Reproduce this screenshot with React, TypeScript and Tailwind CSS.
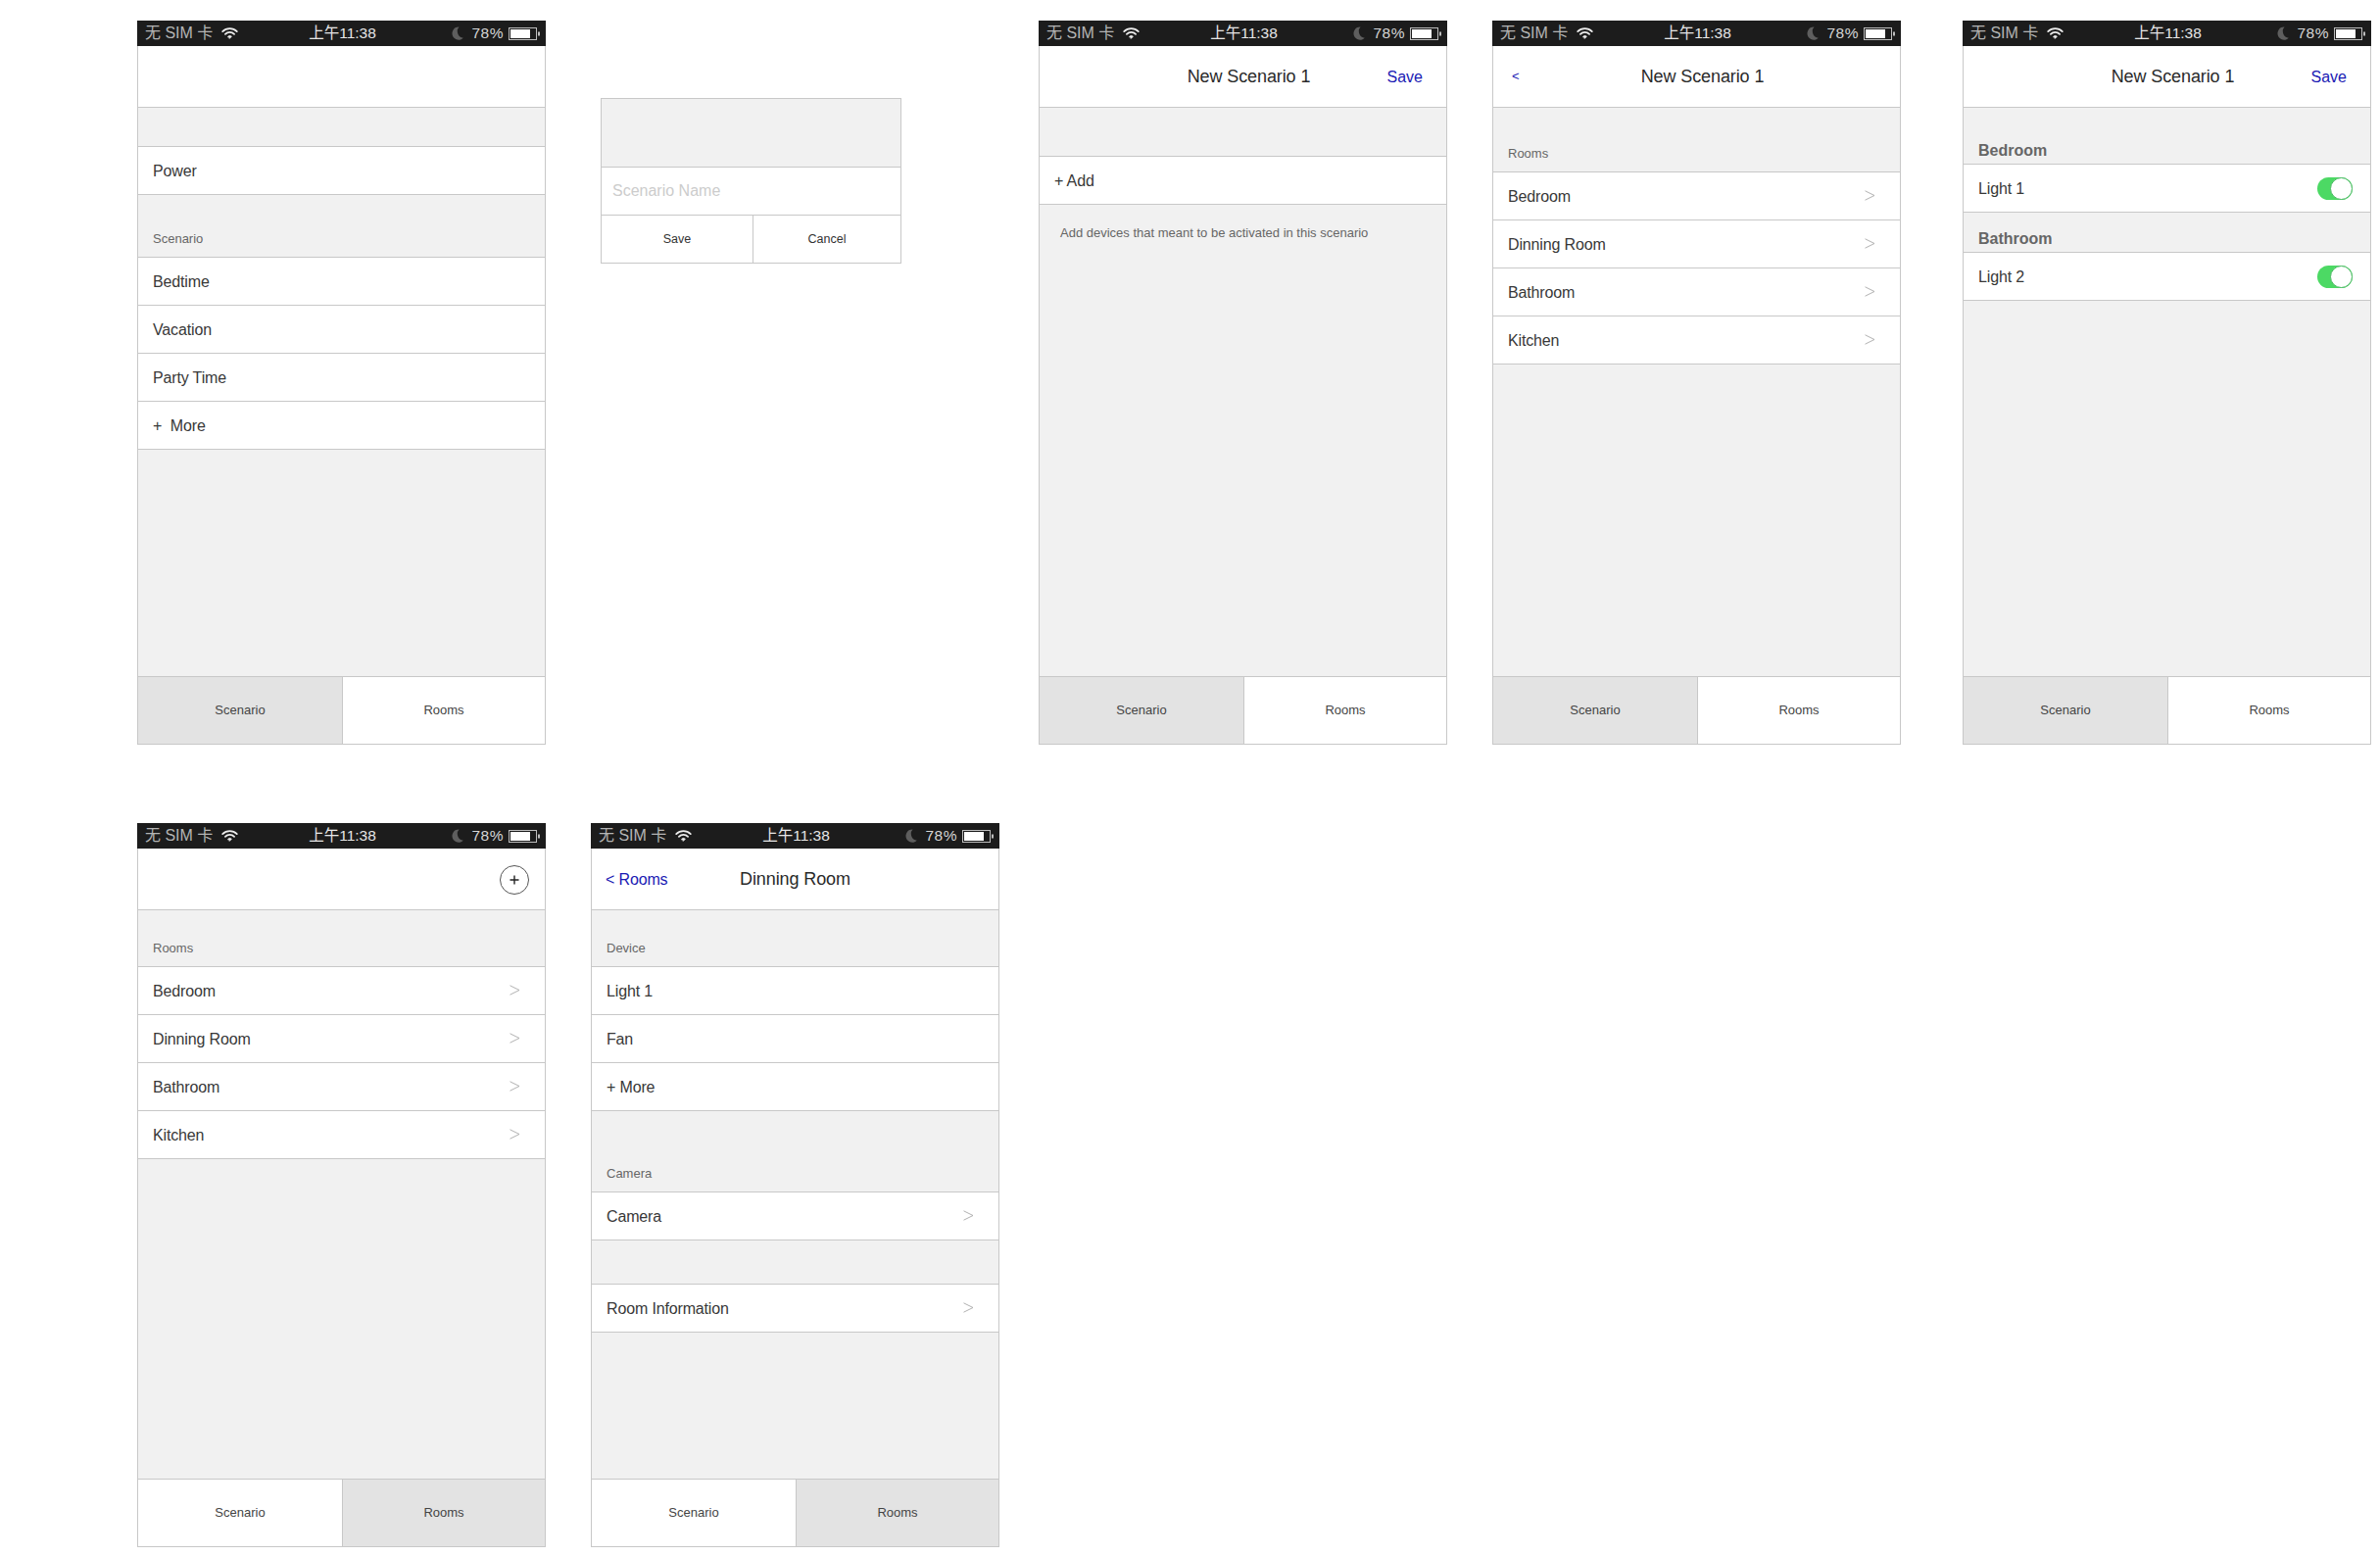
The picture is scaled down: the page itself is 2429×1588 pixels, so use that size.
import React from 'react';

type Tab = 'Scenario' | 'Rooms';

const StatusBar: React.FC = () => (
  <div className="flex h-[26px] items-center bg-[#1c1c1c] pl-[8px] pr-[6px]">
    <div className="flex flex-1 items-center text-[16px] text-[#b4b4b4]">
      <span>无 SIM 卡</span>
      <svg className="ml-[9px]" width="17" height="12" viewBox="0 0 17 12" fill="none" stroke="#ececec" strokeLinecap="round">
        <path d="M1.2 4.2a10.2 10.2 0 0 1 14.6 0" strokeWidth="1.7" />
        <path d="M3.9 6.9a6.4 6.4 0 0 1 9.2 0" strokeWidth="1.7" />
        <path d="M6.5 9.3a2.8 2.8 0 0 1 4 0L8.5 11.3z" fill="#ececec" strokeWidth="0.6" />
      </svg>
    </div>
    <span className="text-[15.5px] text-[#e6e6e6]">上午11:38</span>
    <div className="flex flex-1 items-center justify-end">
      <svg width="12" height="14" viewBox="0 0 12 14">
        <path d="M7.5 0.5a6.6 6.6 0 1 0 4.3 11.2A6.8 6.8 0 0 1 7.5 0.5z" fill="#5e5e5e" />
      </svg>
      <span className="ml-[8px] text-[15.5px] tracking-[0.5px] text-[#d6d6d6]">78%</span>
      <svg className="ml-[5px]" width="32" height="13" viewBox="0 0 32 13">
        <rect x="0.5" y="0.5" width="28" height="12" fill="none" stroke="#bdbdbd" />
        <rect x="2" y="2" width="20" height="9" fill="#ffffff" />
        <rect x="30" y="4.5" width="2" height="4" fill="#bdbdbd" />
      </svg>
    </div>
  </div>
);

const Row: React.FC<{ children: React.ReactNode; chevron?: boolean; right?: React.ReactNode }> = ({ children, chevron, right }) => (
  <div className="flex h-[49px] items-center justify-between border-b border-[#c8c8c8] bg-white pl-[15px] text-[16px] tracking-[-0.15px] text-[#383838]">
    <span className="pt-[2px]">{children}</span>
    {chevron && (
      <svg className="mb-[2px] mr-[25px]" width="11" height="11" viewBox="0 0 11 11" fill="none" stroke="#a8a8a8" strokeWidth="0.9">
        <path d="M0.5 0.8L10 5.5L0.5 10.2" />
      </svg>
    )}
    {right}
  </div>
);

const SectionLabel: React.FC<{ height: string; children?: React.ReactNode }> = ({ height, children }) => (
  <div className={`flex items-end border-b border-[#c8c8c8] pb-[10px] pl-[15px] text-[13px] leading-[16px] text-[#666666] ${height}`}>
    {children}
  </div>
);

const GroupLabel: React.FC<{ height: string; children: React.ReactNode }> = ({ height, children }) => (
  <div className={`flex items-end border-b border-[#c8c8c8] pb-[1px] pl-[15px] text-[16px] font-bold text-[#666666] ${height}`}>
    {children}
  </div>
);

const Toggle: React.FC = () => (
  <div className="mr-[18px] flex h-[23px] w-[36px] items-center justify-end rounded-full bg-[#4cd964]">
    <div className="h-[23px] w-[23px] rounded-full border border-[#4cb964] bg-white" />
  </div>
);

const GroupRow: React.FC<{ label: string }> = ({ label }) => <Row right={<Toggle />}>{label}</Row>;

const Phone: React.FC<{ active: Tab; nav?: React.ReactNode; children: React.ReactNode }> = ({ active, nav, children }) => (
  <div className="flex h-[739px] w-[417px] shrink-0 flex-col">
    <StatusBar />
    <div className="flex min-h-0 flex-1 flex-col border-x border-b border-[#c8c8c8]">
      <div className="grid h-[63px] shrink-0 grid-cols-[1fr_auto_1fr] items-center border-b border-[#c8c8c8] bg-white">
        {nav}
      </div>
      <div className="flex-1 bg-[#f1f1f1]">{children}</div>
      <div className="flex h-[69px] shrink-0 border-t border-[#c8c8c8] text-[13px] text-[#444444]">
        <div className={`flex w-[209px] items-center justify-center border-r border-[#c8c8c8] ${active === 'Scenario' ? 'bg-[#e3e3e3]' : 'bg-white'}`}>
          Scenario
        </div>
        <div className={`flex flex-1 items-center justify-center ${active === 'Rooms' ? 'bg-[#e3e3e3]' : 'bg-white'}`}>
          Rooms
        </div>
      </div>
    </div>
  </div>
);

const Title: React.FC<{ shift?: boolean; children: React.ReactNode }> = ({ shift, children }) => (
  <span className={`col-start-2 text-[18px] tracking-[-0.1px] text-[#2a2a2a] ${shift ? 'ml-[12px]' : ''}`}>{children}</span>
);

const ScenarioNav: React.FC<{ back?: boolean; save?: boolean }> = ({ back, save }) => (
  <>
    <span className="pl-[19px] text-[13px] text-[#1a1ab4]">{back ? '<' : ''}</span>
    <Title shift>New Scenario 1</Title>
    <span className="pr-[24px] pt-[1px] text-right text-[16px] text-[#1a1ab4]">{save ? 'Save' : ''}</span>
  </>
);

const SaveDialog: React.FC = () => (
  <div className="mt-[79px] w-[307px] shrink-0 border border-[#c8c8c8]">
    <div className="h-[70px] border-b border-[#c8c8c8] bg-[#f1f1f1]" />
    <div className="flex h-[49px] items-center border-b border-[#c8c8c8] pl-[11px] text-[16px] text-[#cccccc]">Scenario Name</div>
    <div className="flex h-[48px] text-[12.5px] text-[#333333]">
      <div className="flex w-[155px] items-center justify-center border-r border-[#c8c8c8]">Save</div>
      <div className="flex flex-1 items-center justify-center">Cancel</div>
    </div>
  </div>
);

const roomRows = ['Bedroom', 'Dinning Room', 'Bathroom', 'Kitchen'];

const App: React.FC = () => {
  return (
    <div className="min-h-[1588px] bg-white pl-[140px] pt-[21px] font-['Liberation_Sans','Noto_Sans_CJK_SC',sans-serif]">
      <div className="flex items-start">
        <Phone active="Scenario">
          <div className="h-[40px] border-b border-[#c8c8c8]" />
          <Row>Power</Row>
          <SectionLabel height="h-[64px]">Scenario</SectionLabel>
          <Row>Bedtime</Row>
          <Row>Vacation</Row>
          <Row>Party Time</Row>
          <Row>+&nbsp;&nbsp;More</Row>
        </Phone>

        <div className="ml-[56px] mr-[140px]">
          <SaveDialog />
        </div>

        <Phone active="Scenario" nav={<ScenarioNav save />}>
          <div className="h-[50px] border-b border-[#c8c8c8]" />
          <Row>+ Add</Row>
          <p className="pl-[21px] pt-[19px] text-[13px] text-[#666666]">Add devices that meant to be activated in this scenario</p>
        </Phone>

        <div className="ml-[46px] mr-[63px]">
          <Phone active="Scenario" nav={<ScenarioNav back />}>
            <SectionLabel height="h-[66px]">Rooms</SectionLabel>
            {roomRows.map((room) => (
              <Row key={room} chevron>{room}</Row>
            ))}
          </Phone>
        </div>

        <Phone active="Scenario" nav={<ScenarioNav save />}>
          <GroupLabel height="h-[58px]">Bedroom</GroupLabel>
          <GroupRow label="Light 1" />
          <GroupLabel height="h-[41px]">Bathroom</GroupLabel>
          <GroupRow label="Light 2" />
        </Phone>
      </div>

      <div className="mt-[80px] flex items-start gap-[46px]">
        <Phone
          active="Rooms"
          nav={
            <div className="col-start-3 flex justify-end pr-[16px] pt-[1px]">
              <div className="flex h-[30px] w-[30px] items-center justify-center rounded-full border border-[#555555] text-[#222222]">
                <svg width="12" height="12" viewBox="0 0 12 12" stroke="#222222" strokeWidth="1.4">
                  <path d="M6 1.5V10.5M1.5 6H10.5" />
                </svg>
              </div>
            </div>
          }
        >
          <SectionLabel height="h-[58px]">Rooms</SectionLabel>
          {roomRows.map((room) => (
            <Row key={room} chevron>{room}</Row>
          ))}
        </Phone>

        <Phone
          active="Rooms"
          nav={
            <>
              <span className="pl-[14px] pt-[2px] text-[16px] tracking-[-0.15px] text-[#1a1ab4]">&lt; Rooms</span>
              <Title>Dinning Room</Title>
            </>
          }
        >
          <SectionLabel height="h-[58px]">Device</SectionLabel>
          <Row>Light 1</Row>
          <Row>Fan</Row>
          <Row>+ More</Row>
          <SectionLabel height="h-[83px]">Camera</SectionLabel>
          <Row chevron>Camera</Row>
          <div className="h-[45px] border-b border-[#c8c8c8]" />
          <Row chevron>Room Information</Row>
        </Phone>
      </div>
    </div>
  );
};

export default App;
